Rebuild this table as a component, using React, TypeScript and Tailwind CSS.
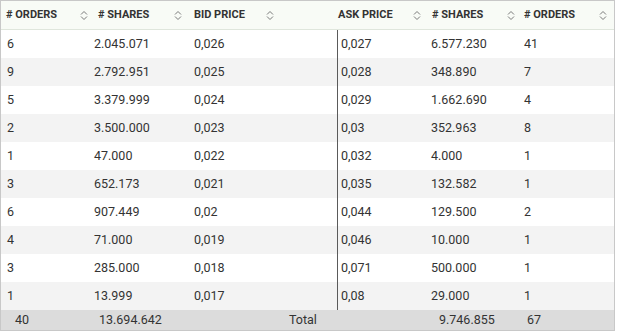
const rows = [
  ["6", "2.045.071", "0,026", "0,027", "6.577.230", "41"],
  ["9", "2.792.951", "0,025", "0,028", "348.890", "7"],
  ["5", "3.379.999", "0,024", "0,029", "1.662.690", "4"],
  ["2", "3.500.000", "0,023", "0,03", "352.963", "8"],
  ["1", "47.000", "0,022", "0,032", "4.000", "1"],
  ["3", "652.173", "0,021", "0,035", "132.582", "1"],
  ["6", "907.449", "0,02", "0,044", "129.500", "2"],
  ["4", "71.000", "0,019", "0,046", "10.000", "1"],
  ["3", "285.000", "0,018", "0,071", "500.000", "1"],
  ["1", "13.999", "0,017", "0,08", "29.000", "1"],
];

const grid = "grid grid-cols-[91px_96px_90px_59px_88px_92px_98px]";

const SortIcon = () => (
  <svg width="8" height="11" viewBox="0 0 8 11" fill="none" stroke="#7a7a7a" strokeWidth="1">
    <path d="M1 4.5 L4 1.5 L7 4.5" />
    <path d="M1 6.5 L4 9.5 L7 6.5" />
  </svg>
);

const Head = ({ label, cls }: { label: string; cls: string }) => (
  <div className={`flex items-center justify-between ${cls}`}>
    <span>{label}</span>
    <SortIcon />
  </div>
);

export default function App() {
  return (
    <div
      className="w-[615px] bg-white text-[#333]"
      style={{ fontFamily: "Roboto, 'Liberation Sans', sans-serif" }}
    >
      <div className="border-x border-t border-[#c8c8c8]">
        {/* header */}
        <div className={`${grid} h-[29px] bg-[#f8fbf6] border-b border-[#dfe6dc] text-[11px] font-bold text-[#333]`}>
          <Head label="# ORDERS" cls="pl-[5px] pr-[4px]" />
          <Head label="# SHARES" cls="pl-[6px] pr-[6px]" />
          <Head label="BID PRICE" cls="pl-[6px] pr-[4px]" />
          <div />
          <Head label="ASK PRICE" cls="pl-[1px] pr-[4px]" />
          <Head label="# SHARES" cls="pl-[7px] pr-[2px]" />
          <Head label="# ORDERS" cls="pl-[7px] pr-[8px]" />
        </div>

        {/* rows */}
        {rows.map((r, i) => (
          <div key={i} className={`${grid} h-[28px] text-[12.5px] ${i % 2 ? "bg-[#f3f3f3]" : "bg-white"}`}>
            <div className="flex items-center pl-[6px]">{r[0]}</div>
            <div className="flex items-center pl-[2px]">{r[1]}</div>
            <div className="flex items-center pl-[6px]">{r[2]}</div>
            <div />
            <div className="flex items-center pl-[3px] border-l border-[#5a5a5a]">{r[3]}</div>
            <div className="flex items-center pl-[6px]">{r[4]}</div>
            <div className="flex items-center pl-[7px]">{r[5]}</div>
          </div>
        ))}

        {/* total */}
        <div className="grid grid-cols-[84px_190px_150px_88px_1fr] h-[21px] pl-[14px] bg-[#dcdcdc] border-b border-[#c8c8c8] text-[12.5px] text-[#333] items-center">
          <div>40</div>
          <div>13.694.642</div>
          <div>Total</div>
          <div>9.746.855</div>
          <div>67</div>
        </div>
      </div>
    </div>
  );
}
